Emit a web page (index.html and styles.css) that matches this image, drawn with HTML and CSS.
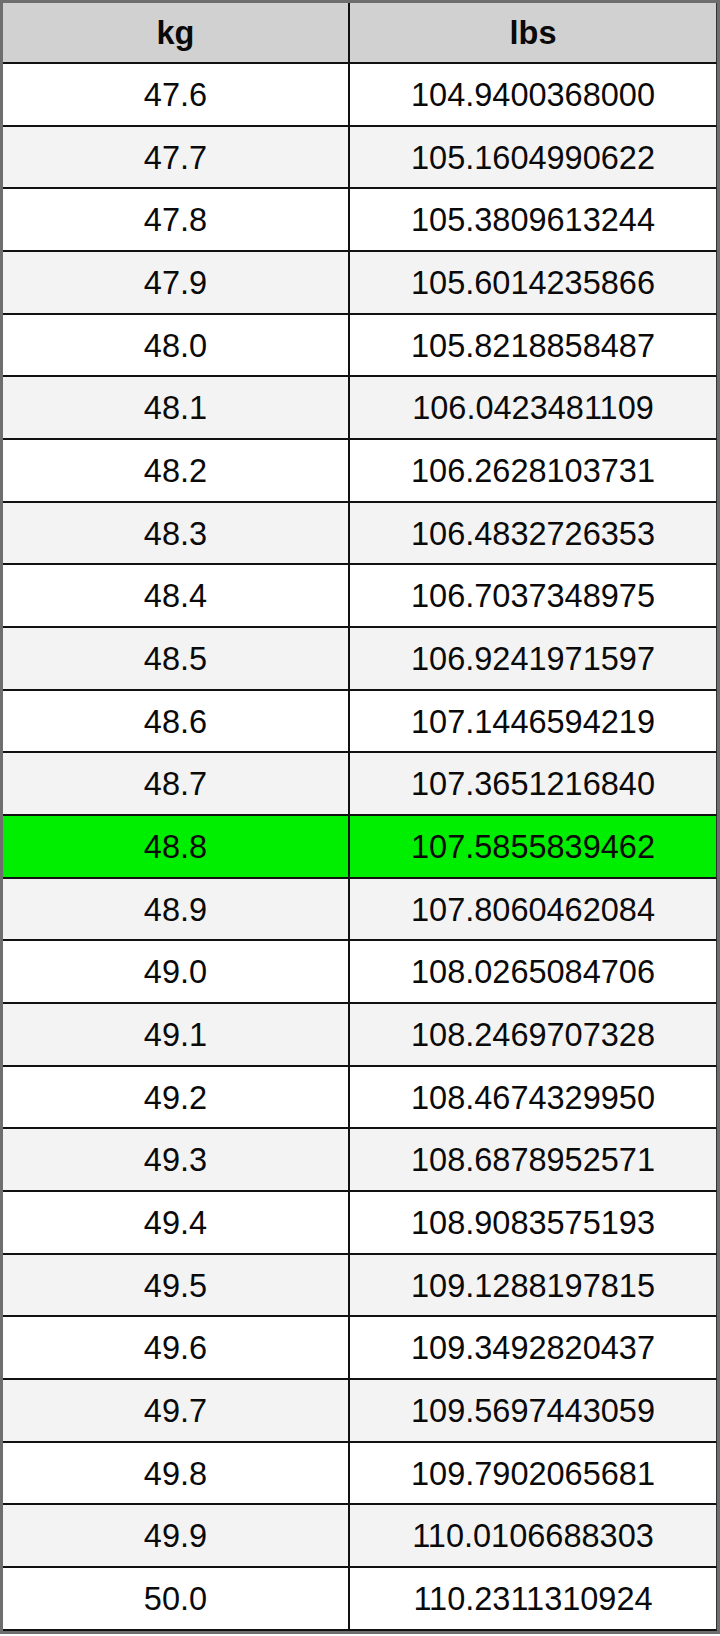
FILE: index.html
```html
<!DOCTYPE html>
<html lang="en">
<head>
<meta charset="utf-8">
<title>kg to lbs</title>
<link rel="stylesheet" href="styles.css">
</head>
<body>
<div class="table">
  <div class="cell head">kg</div><div class="cell head right">lbs</div>
  <div class="cell">47.6</div><div class="cell right">104.9400368000</div>
  <div class="cell alt">47.7</div><div class="cell alt right">105.1604990622</div>
  <div class="cell">47.8</div><div class="cell right">105.3809613244</div>
  <div class="cell alt">47.9</div><div class="cell alt right">105.6014235866</div>
  <div class="cell">48.0</div><div class="cell right">105.8218858487</div>
  <div class="cell alt">48.1</div><div class="cell alt right">106.0423481109</div>
  <div class="cell">48.2</div><div class="cell right">106.2628103731</div>
  <div class="cell alt">48.3</div><div class="cell alt right">106.4832726353</div>
  <div class="cell">48.4</div><div class="cell right">106.7037348975</div>
  <div class="cell alt">48.5</div><div class="cell alt right">106.9241971597</div>
  <div class="cell">48.6</div><div class="cell right">107.1446594219</div>
  <div class="cell alt">48.7</div><div class="cell alt right">107.3651216840</div>
  <div class="cell hl">48.8</div><div class="cell hl right">107.5855839462</div>
  <div class="cell alt">48.9</div><div class="cell alt right">107.8060462084</div>
  <div class="cell">49.0</div><div class="cell right">108.0265084706</div>
  <div class="cell alt">49.1</div><div class="cell alt right">108.2469707328</div>
  <div class="cell">49.2</div><div class="cell right">108.4674329950</div>
  <div class="cell alt">49.3</div><div class="cell alt right">108.6878952571</div>
  <div class="cell">49.4</div><div class="cell right">108.9083575193</div>
  <div class="cell alt">49.5</div><div class="cell alt right">109.1288197815</div>
  <div class="cell">49.6</div><div class="cell right">109.3492820437</div>
  <div class="cell alt">49.7</div><div class="cell alt right">109.5697443059</div>
  <div class="cell">49.8</div><div class="cell right">109.7902065681</div>
  <div class="cell alt">49.9</div><div class="cell alt right">110.0106688303</div>
  <div class="cell">50.0</div><div class="cell right">110.2311310924</div>
</div>
</body>
</html>
```
FILE: styles.css
```css
html, body {
  margin: 0;
  padding: 0;
  background: #ffffff;
}
.table {
  width: 720px;
  box-sizing: border-box;
  border: 3px solid #6e6e6e;
  display: grid;
  grid-template-columns: 345px 1fr;
  grid-template-rows: 61px;
  grid-auto-rows: 62.68px;
  font-family: "Liberation Sans", Arial, sans-serif;
  font-size: 32.5px;
  color: #0a0a0a;
}
.cell {
  box-sizing: border-box;
  display: flex;
  align-items: center;
  justify-content: center;
  border-bottom: 2px solid #111111;
  background: #ffffff;
  padding-top: 2px;
}
.right {
  border-left: 2px solid #111111;
  border-right: 1px solid #333333;
}
.head {
  background: #d1d1d1;
  font-weight: bold;
}
.alt {
  background: #f3f3f3;
}
.hl {
  background: #00ee00;
}
```
